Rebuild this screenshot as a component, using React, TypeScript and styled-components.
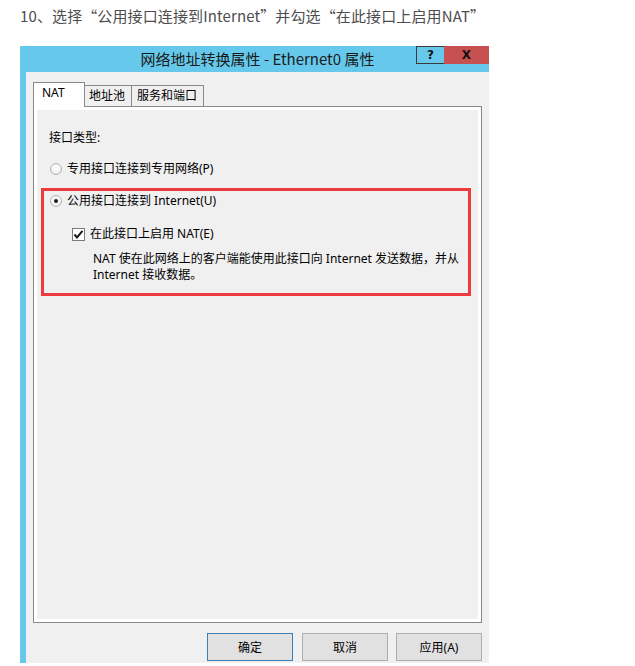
import React from "react";
import styled, { createGlobalStyle } from "styled-components";

const GlobalStyle = createGlobalStyle`
  html, body { margin: 0; padding: 0; background: #ffffff; }
  body { font-family: "Noto Sans", "Noto Sans CJK SC", sans-serif; }
  * { box-sizing: border-box; }
`;

const Page = styled.div`
  width: 635px;
  height: 666px;
  padding-left: 20px;
  overflow: hidden;
`;

const Heading = styled.p`
  margin: 0;
  height: 46px;
  padding-top: 8px;
  font-family: "Noto Sans CJK SC", sans-serif;
  font-size: 15px;
  line-height: 16px;
  letter-spacing: 0.12px;
  color: #4d4d4d;
  white-space: nowrap;
`;

const Window = styled.div`
  width: 469px;
  height: 617px;
  background: #66c9ec;
  display: flex;
  flex-direction: column;
  overflow: hidden;
`;

const TitleBar = styled.div`
  height: 26px;
  display: grid;
  grid-template-areas: "bar";
  flex: none;
`;

const Title = styled.div`
  grid-area: bar;
  padding-left: 6px;
  text-align: center;
  font-family: "Noto Sans CJK SC", sans-serif;
  font-size: 15px;
  line-height: 25px;
  color: #1a1a1a;
  white-space: nowrap;
`;

const Caption = styled.div`
  grid-area: bar;
  justify-self: end;
  align-self: start;
  display: flex;
  height: 18px;
`;

const CaptionButton = styled.div<{ $close?: boolean }>`
  width: ${(p) => (p.$close ? 45 : 28)}px;
  height: 18px;
  display: flex;
  align-items: center;
  justify-content: center;
  background: ${(p) => (p.$close ? "#c75050" : "#66c9ec")};
  border: ${(p) => (p.$close ? "none" : "1px solid #3a3a3a")};
  border-right: none;
  font-family: "DejaVu Sans", sans-serif;
  font-weight: bold;
  font-size: 12px;
  color: #111;
`;

const Client = styled.div`
  flex: 1;
  margin-left: 6px;
  background: #f0f0f0;
  padding: 10px 7px 0 7px;
  display: flex;
  flex-direction: column;
`;

const TabStrip = styled.div`
  display: flex;
  height: 24px;
  align-items: flex-end;
`;

const Tab = styled.div<{ $active?: boolean; $w: number; $pl: number }>`
  position: relative;
  z-index: ${(p) => (p.$active ? 2 : 1)};
  width: ${(p) => p.$w}px;
  height: ${(p) => (p.$active ? 25 : 21)}px;
  align-self: ${(p) => (p.$active ? "flex-start" : "flex-end")};
  padding-left: ${(p) => p.$pl}px;
  background: ${(p) => (p.$active ? "#ffffff" : "#f0f0f0")};
  border: 1px solid #898989;
  border-bottom: none;
  border-left: ${(p) => (p.$active ? "1px solid #898989" : "none")};
  font-size: 12px;
  line-height: 20px;
  color: #000;
  white-space: nowrap;
`;

const TabPanel = styled.div`
  height: 517px;
  border: 1px solid #898989;
  background: #f0f0f0;
  box-shadow: inset 0 0 0 3px #ffffff;
  padding: 23px 0 0 15px;
  display: flex;
  flex-direction: column;
  align-items: flex-start;
`;

const Label = styled.div`
  font-size: 12px;
  line-height: 16px;
  color: #000;
`;

const OptionRow = styled.div<{ $mt: number; $ml?: number }>`
  display: flex;
  align-items: center;
  margin-top: ${(p) => p.$mt}px;
  margin-left: ${(p) => p.$ml ?? 0}px;
  height: 16px;
  font-size: 12px;
  line-height: 16px;
  color: #000;
  white-space: nowrap;
`;

const Radio = styled.span<{ $checked?: boolean }>`
  width: 12px;
  height: 12px;
  border-radius: 50%;
  border: 1px solid #b4b4b4;
  background: radial-gradient(circle at 50% 40%, #ffffff 0%, #f4f4f4 55%, #dcdcdc 100%);
  display: inline-flex;
  align-items: center;
  justify-content: center;
  margin-right: 5px;
  flex: none;
  &::after {
    content: "";
    display: ${(p) => (p.$checked ? "block" : "none")};
    width: 4px;
    height: 4px;
    border-radius: 50%;
    background: #1a1a1a;
  }
`;

const Checkbox = styled.span`
  width: 13px;
  height: 13px;
  border: 1px solid #7a7a7a;
  background: #ffffff;
  display: inline-flex;
  align-items: center;
  justify-content: center;
  margin-right: 5px;
  flex: none;
`;

const Highlight = styled.div`
  margin-top: 11px;
  margin-left: -8px;
  width: 430px;
  border: 3px solid #ee3b3d;
  padding: 2px 0 10px 6px;
  display: flex;
  flex-direction: column;
  align-items: flex-start;
`;

const Description = styled.p`
  margin: 9px 0 0 43px;
  font-size: 12px;
  line-height: 16px;
  color: #000;
  white-space: nowrap;
`;

const ButtonRow = styled.div`
  display: flex;
  justify-content: flex-end;
  gap: 9px;
  margin-top: 10px;
`;

const DialogButton = styled.div<{ $default?: boolean }>`
  width: 86px;
  height: 28px;
  display: flex;
  align-items: center;
  justify-content: center;
  background: #e1e1e1;
  border: 1px solid ${(p) => (p.$default ? "#3c7fb1" : "#adadad")};
  font-size: 12px;
  color: #000;
  &:last-child { margin-left: -1px; }
`;

const CheckMark = () => (
  <svg width="11" height="11" viewBox="0 0 11 11">
    <path d="M1.5 5.5 L4 8.5 L9.5 1.8" fill="none" stroke="#1a1a1a" strokeWidth="2" />
  </svg>
);

export default function App() {
  return (
    <>
      <GlobalStyle />
      <Page>
        <Heading>10、选择“公用接口连接到Internet”并勾选“在此接口上启用NAT”</Heading>
        <Window>
          <TitleBar>
            <Title>网络地址转换属性 - Ethernet0 属性</Title>
            <Caption>
              <CaptionButton>?</CaptionButton>
              <CaptionButton $close>X</CaptionButton>
            </Caption>
          </TitleBar>
          <Client>
            <TabStrip>
              <Tab $active $w={52} $pl={8}>NAT</Tab>
              <Tab $w={47} $pl={4}>地址池</Tab>
              <Tab $w={72} $pl={5}>服务和端口</Tab>
            </TabStrip>
            <TabPanel>
              <Label>接口类型:</Label>
              <OptionRow $mt={15} $ml={1}>
                <Radio />
                专用接口连接到专用网络(P)
              </OptionRow>
              <Highlight>
                <OptionRow $mt={0}>
                  <Radio $checked />
                  公用接口连接到 Internet(U)
                </OptionRow>
                <OptionRow $mt={17} $ml={22}>
                  <Checkbox>
                    <CheckMark />
                  </Checkbox>
                  在此接口上启用 NAT(E)
                </OptionRow>
                <Description>
                  NAT 使在此网络上的客户端能使用此接口向 Internet 发送数据，并从
                  <br />
                  Internet 接收数据。
                </Description>
              </Highlight>
            </TabPanel>
            <ButtonRow>
              <DialogButton $default>确定</DialogButton>
              <DialogButton>取消</DialogButton>
              <DialogButton>应用(A)</DialogButton>
            </ButtonRow>
          </Client>
        </Window>
      </Page>
    </>
  );
}
